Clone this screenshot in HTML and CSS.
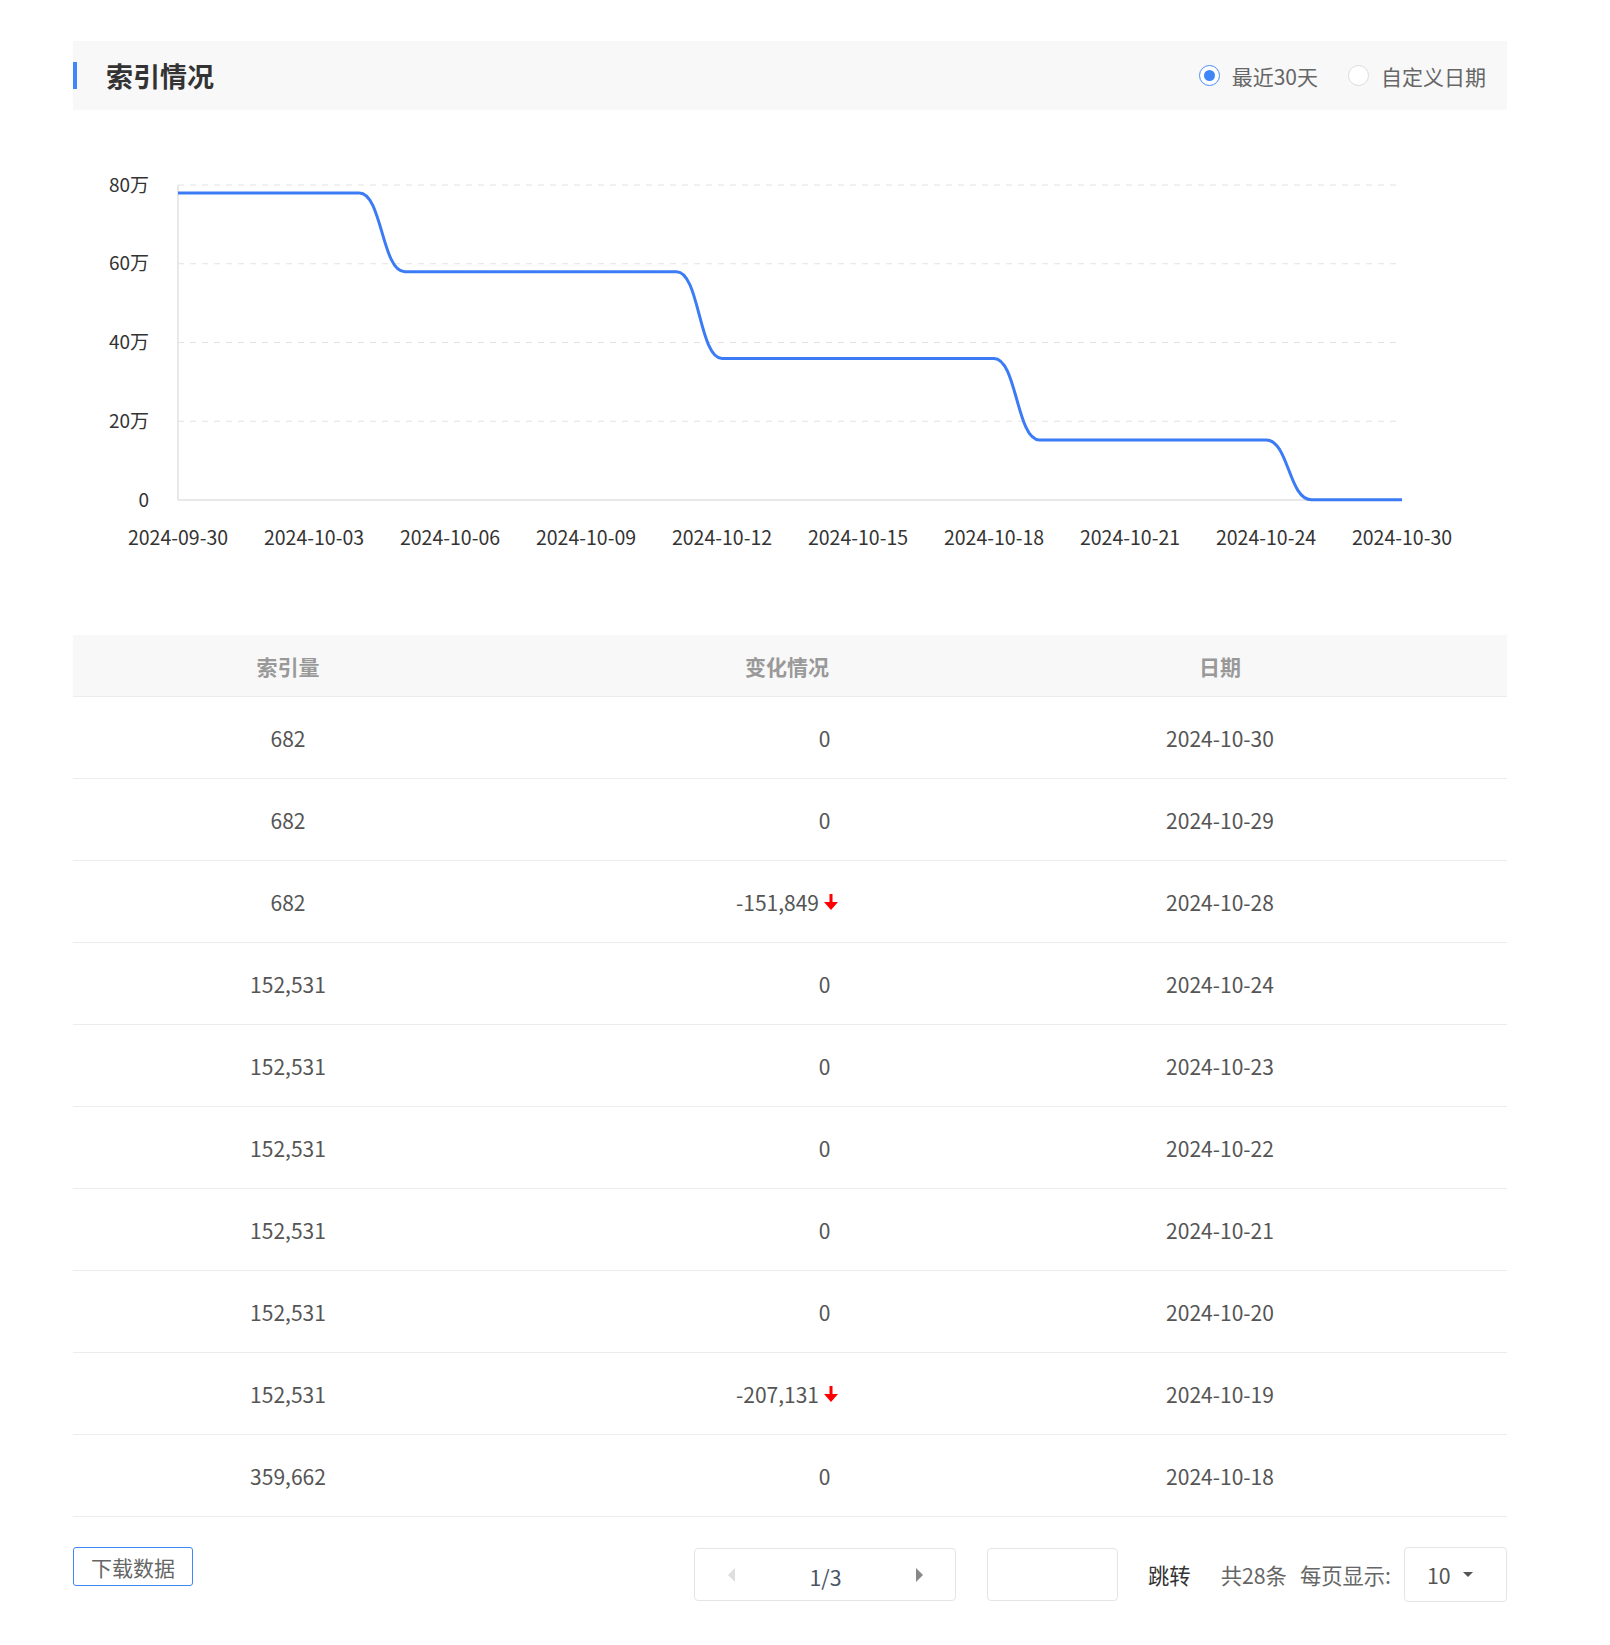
FILE: index.html
```html
<!DOCTYPE html>
<html lang="zh-CN">
<head>
<meta charset="utf-8">
<title>索引情况</title>
<link rel="stylesheet" href="styles.css">
</head>
<body>
<div class="page">
  <div class="section-header">
    <div class="title-wrap">
      <span class="title-bar"></span>
      <h2 class="title">索引情况</h2>
    </div>
    <div class="radio-group">
      <label class="radio checked"><span class="radio-dot"></span><span class="radio-text">最近30天</span></label>
      <label class="radio"><span class="radio-dot"></span><span class="radio-text">自定义日期</span></label>
    </div>
  </div>

  <div class="chart">
    <svg class="chart-svg" width="1434" height="525" viewBox="0 0 1434 525">
      <g class="grid">
        <line x1="105" y1="75" x2="1329" y2="75"/>
        <line x1="105" y1="153.75" x2="1329" y2="153.75"/>
        <line x1="105" y1="232.5" x2="1329" y2="232.5"/>
        <line x1="105" y1="311.25" x2="1329" y2="311.25"/>
      </g>
      <line class="axis" x1="105" y1="75" x2="105" y2="390"/>
      <line class="axis" x1="105" y1="390" x2="1329" y2="390"/>
      <g class="ylabels">
        <text x="76" y="73">80万</text>
        <text x="76" y="151.75">60万</text>
        <text x="76" y="230.5">40万</text>
        <text x="76" y="309.25">20万</text>
        <text x="76" y="388">0</text>
      </g>
      <g class="xlabels">
        <text x="105" y="426">2024-09-30</text>
        <text x="241" y="426">2024-10-03</text>
        <text x="377" y="426">2024-10-06</text>
        <text x="513" y="426">2024-10-09</text>
        <text x="649" y="426">2024-10-12</text>
        <text x="785" y="426">2024-10-15</text>
        <text x="921" y="426">2024-10-18</text>
        <text x="1057" y="426">2024-10-21</text>
        <text x="1193" y="426">2024-10-24</text>
        <text x="1329" y="426">2024-10-30</text>
      </g>
      <path class="series" d="M105,83 H286.33 C309,83 309,161.7 331.67,161.7 H603.67 C626.33,161.7 626.33,248.4 649,248.4 H921 C943.67,248.4 943.67,329.9 966.33,329.9 H1193 C1215.67,329.9 1215.67,389.7 1238.33,389.7 H1329"/>
    </svg>
  </div>

  <div class="table">
    <div class="row head">
      <div class="cell">索引量</div>
      <div class="cell">变化情况</div>
      <div class="cell">日期</div>
    </div>
    <div class="row"><div class="cell">682</div><div class="cell zero">0</div><div class="cell">2024-10-30</div></div>
    <div class="row"><div class="cell">682</div><div class="cell zero">0</div><div class="cell">2024-10-29</div></div>
    <div class="row"><div class="cell">682</div><div class="cell"><span class="change">-151,849<svg class="down" width="14" height="17" viewBox="0 0 14 17"><rect x="5.5" y="0" width="3" height="9" fill="#f00"/><path d="M0 8 H14 L7 16 Z" fill="#f00"/></svg></span></div><div class="cell">2024-10-28</div></div>
    <div class="row"><div class="cell">152,531</div><div class="cell zero">0</div><div class="cell">2024-10-24</div></div>
    <div class="row"><div class="cell">152,531</div><div class="cell zero">0</div><div class="cell">2024-10-23</div></div>
    <div class="row"><div class="cell">152,531</div><div class="cell zero">0</div><div class="cell">2024-10-22</div></div>
    <div class="row"><div class="cell">152,531</div><div class="cell zero">0</div><div class="cell">2024-10-21</div></div>
    <div class="row"><div class="cell">152,531</div><div class="cell zero">0</div><div class="cell">2024-10-20</div></div>
    <div class="row"><div class="cell">152,531</div><div class="cell"><span class="change">-207,131<svg class="down" width="14" height="17" viewBox="0 0 14 17"><rect x="5.5" y="0" width="3" height="9" fill="#f00"/><path d="M0 8 H14 L7 16 Z" fill="#f00"/></svg></span></div><div class="cell">2024-10-19</div></div>
    <div class="row"><div class="cell">359,662</div><div class="cell zero">0</div><div class="cell">2024-10-18</div></div>
  </div>

  <div class="footer">
    <button class="download">下载数据</button>
    <div class="pager-area">
      <div class="pager">
        <span class="arrow-left"></span>
        <span class="page-num">1/3</span>
        <span class="arrow-right"></span>
      </div>
      <div class="jump-input"></div>
      <span class="jump">跳转</span>
      <span class="total">共28条</span>
      <span class="per">每页显示:</span>
      <div class="select"><span class="select-val">10</span><span class="caret"></span></div>
    </div>
  </div>
</div>
</body>
</html>
```

FILE: styles.css
```css
* { box-sizing: border-box; }
html, body { margin: 0; padding: 0; background: #fff; }
body {
  font-family: "Noto Sans CJK SC", "Noto Sans", sans-serif;
  color: #555;
}
.page {
  width: 1610px;
  padding: 41px 103px 40px 73px;
}
.section-header {
  height: 69px;
  background: #f8f8f8;
  display: flex;
  align-items: center;
  justify-content: space-between;
  padding-right: 21px;
}
.title-wrap { display: flex; align-items: center; }
.title-bar {
  width: 4px;
  height: 27px;
  background: #3f86f7;
  margin-right: 29px;
}
.title {
  margin: 0;
  font-size: 27px;
  font-weight: 700;
  color: #333;
  line-height: 1;
}
.radio-group { display: flex; align-items: center; gap: 30px; padding-top: 0; }
.radio { display: flex; align-items: center; gap: 12px; font-size: 21px; color: #666; }
.radio-dot {
  width: 21px; height: 21px;
  border-radius: 50%;
  border: 1px solid #dcdcdc;
  background: #fff;
  display: inline-flex; align-items: center; justify-content: center;
}
.radio.checked .radio-dot { border-color: #4a8cf7; }
.radio.checked .radio-dot::after {
  content: "";
  width: 11px; height: 11px; border-radius: 50%;
  background: #3f86f7;
}
.chart { height: 525px; }
.chart-svg { display: block; }
.grid line { stroke: #e2e2e2; stroke-width: 1; stroke-dasharray: 6 6; }
.axis { stroke: #e0e0e0; stroke-width: 1.5; }
.ylabels text {
  font-family: "Noto Sans CJK SC", sans-serif;
  font-size: 19px; fill: #333;
  text-anchor: end; dominant-baseline: central;
}
.xlabels text {
  font-family: "Noto Sans CJK SC", sans-serif;
  font-size: 19.5px; fill: #333;
  text-anchor: middle; dominant-baseline: central;
}
.series { fill: none; stroke: #3b7cf6; stroke-width: 3; stroke-linejoin: round; }

.table { font-size: 21px; color: #555; }
.row {
  display: grid;
  grid-template-columns: 430px 568px 298px 1fr;
  height: 82px;
  border-bottom: 1px solid #ececec;
  align-items: center;
}
.row.head {
  height: 62px;
  background: #f8f8f8;
  font-weight: 700;
  color: #999;
}
.cell { text-align: center; }
.cell.zero { padding-left: 75px; }
.change { display: inline-flex; align-items: center; gap: 5px; }
.down { display: block; margin-top: 2px; }

.footer {
  display: flex;
  justify-content: space-between;
  align-items: flex-start;
  padding-top: 30px;
}
.download {
  width: 120px; height: 39px;
  border: 1px solid #3f86f7;
  border-radius: 3px;
  background: #fff;
  font-family: "Noto Sans CJK SC", sans-serif;
  font-size: 21px;
  color: #666;
  padding: 0;
}
.pager-area { display: flex; align-items: center; font-size: 21.3px; color: #666; }
.pager {
  width: 262px; height: 53px;
  border: 1px solid #e5e5e5;
  border-radius: 4px;
  display: flex; align-items: center; justify-content: space-between;
  padding: 0 32px 0 33px;
}
.arrow-left {
  width: 0; height: 0;
  border-top: 7px solid transparent;
  border-bottom: 7px solid transparent;
  border-right: 7px solid #dedede;
}
.arrow-right {
  width: 0; height: 0;
  border-top: 7px solid transparent;
  border-bottom: 7px solid transparent;
  border-left: 7px solid #888;
}
.page-num { color: #4a5466; padding-top: 4px; }
.jump-input {
  width: 131px; height: 53px;
  border: 1px solid #e5e5e5;
  border-radius: 4px;
  margin-left: 31px;
}
.jump { margin-left: 30px; color: #333; }
.total { margin-left: 30px; }
.per { margin-left: 13px; }
.select {
  width: 103px; height: 55px;
  border: 1px solid #e5e5e5;
  border-radius: 4px;
  margin-left: 13px;
  display: flex; align-items: center;
  padding-left: 22px;
}
.select-val { color: #555; }
.caret {
  margin-left: 12px;
  width: 0; height: 0;
  border-left: 5px solid transparent;
  border-right: 5px solid transparent;
  border-top: 5px solid #555;
}
```
